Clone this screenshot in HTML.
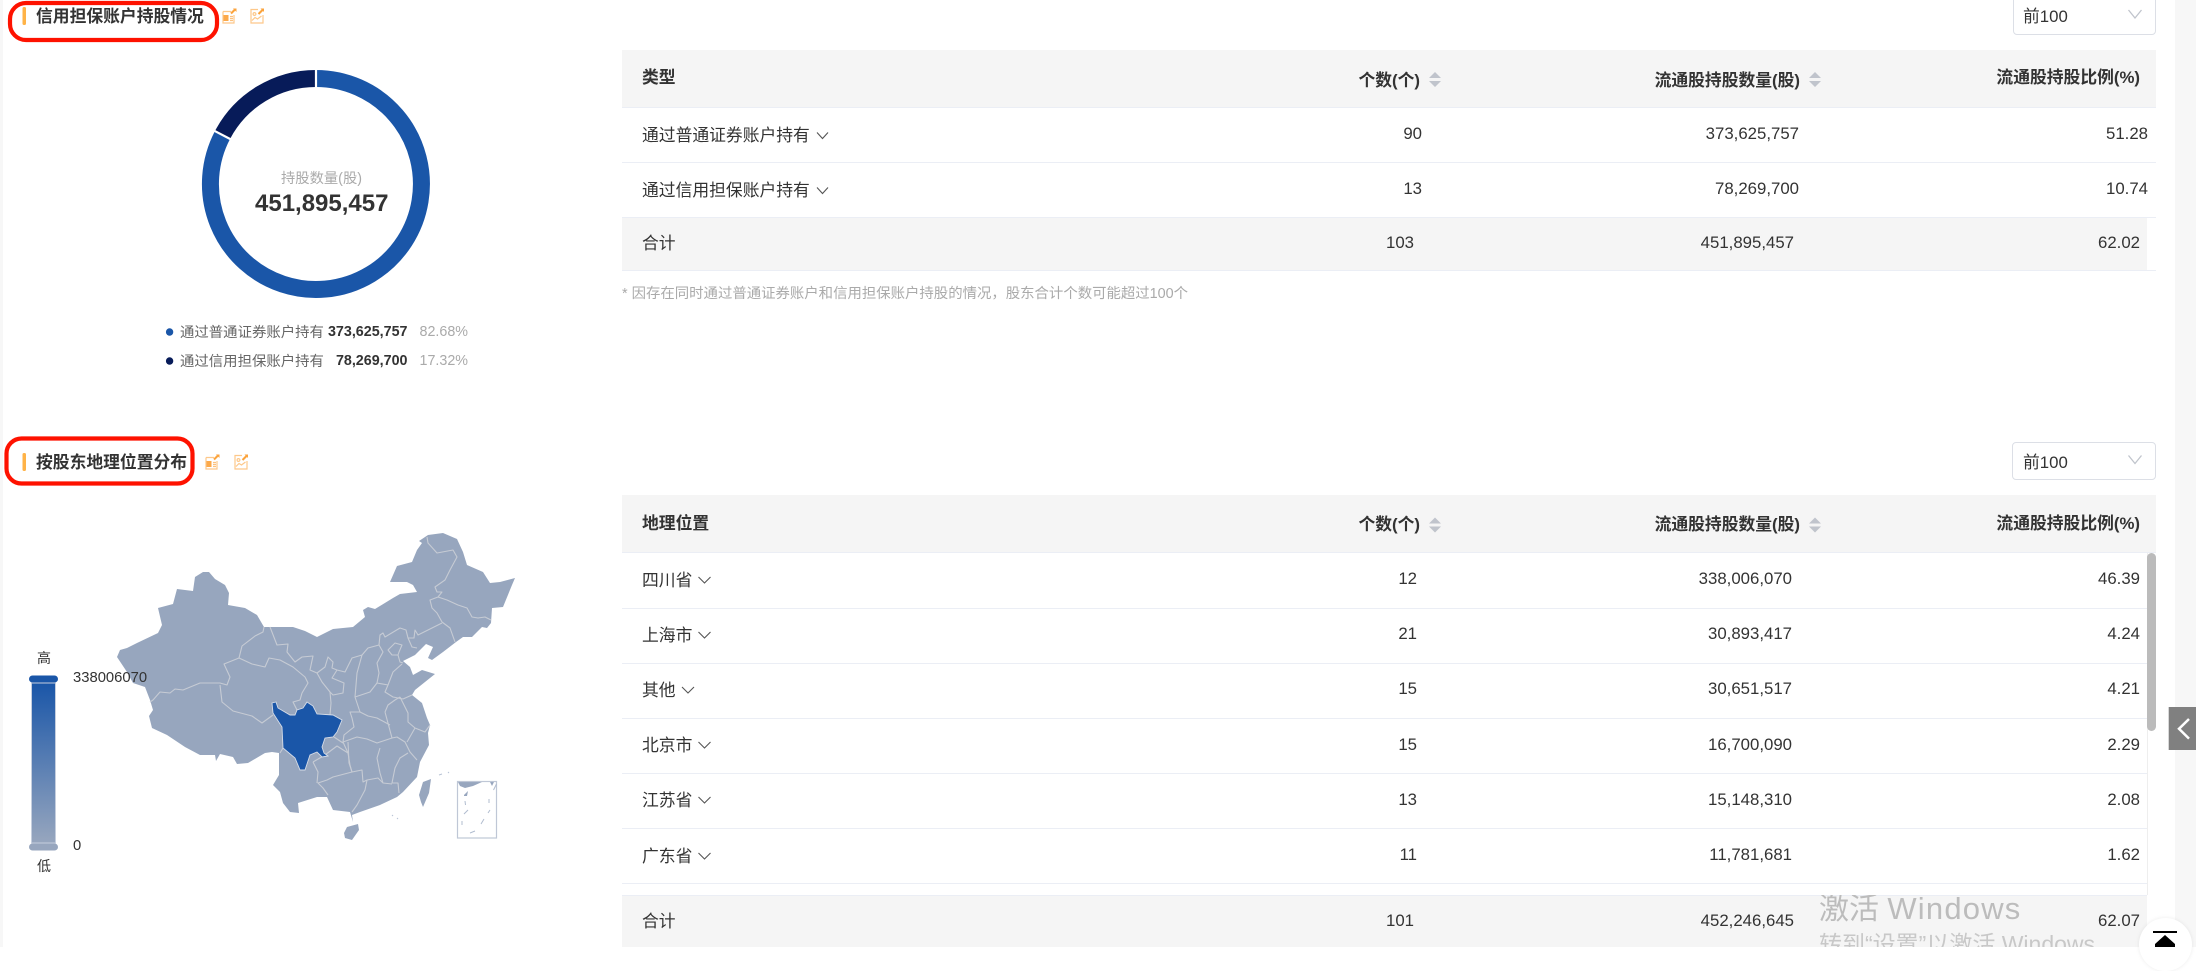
<!DOCTYPE html>
<html lang="zh-CN">
<head>
<meta charset="utf-8">
<title>持股情况</title>
<style>
html,body{margin:0;padding:0;background:#fff}
body{position:relative;width:2196px;height:947px;overflow:hidden;font-family:"Liberation Sans","Noto Sans CJK SC",sans-serif;color:#333;font-size:16.8px}
.a{position:absolute}
.t{position:absolute;white-space:nowrap;line-height:24px;height:24px;z-index:1}
.b{font-weight:700}
.l{position:absolute;height:1px;background:#ebeef5}
.g{position:absolute;background:#f5f5f5}
svg{position:absolute;left:0;top:0}
</style>
</head>
<body>
<div class="a" style="left:0;top:0;width:3px;height:947px;background:#f7f7f7"></div>
<div class="a" style="left:2175px;top:0;width:21px;height:947px;background:#f7f7f7"></div>

<!-- tables backgrounds -->
<div class="g" style="left:622px;top:50px;width:1534px;height:57px"></div>
<div class="g" style="left:622px;top:217px;width:1525px;height:53px"></div>
<div class="l" style="left:622px;top:107px;width:1534px"></div>
<div class="l" style="left:622px;top:162px;width:1534px"></div>
<div class="l" style="left:622px;top:217px;width:1534px"></div>
<div class="l" style="left:622px;top:270px;width:1534px"></div>

<div class="g" style="left:622px;top:495px;width:1534px;height:57px"></div>
<div class="g" style="left:622px;top:895px;width:1525px;height:52px"></div>
<div class="l" style="left:622px;top:552px;width:1534px"></div>
<div class="l" style="left:622px;top:608px;width:1525px"></div>
<div class="l" style="left:622px;top:663px;width:1525px"></div>
<div class="l" style="left:622px;top:718px;width:1525px"></div>
<div class="l" style="left:622px;top:773px;width:1525px"></div>
<div class="l" style="left:622px;top:828px;width:1525px"></div>
<div class="l" style="left:622px;top:883px;width:1525px"></div>
<div class="l" style="left:622px;top:895px;width:1525px"></div>

<!-- scrollbar -->
<div class="a" style="left:2147px;top:553px;width:1px;height:342px;background:#eee"></div>
<div class="a" style="left:2147px;top:553px;width:9px;height:178px;background:#bbb;border-radius:5px"></div>

<!-- section titles -->
<div class="t b" style="left:36px;top:5px;font-size:16.8px">信用担保账户持股情况</div>
<div class="t b" style="left:36px;top:451px;font-size:16.8px">按股东地理位置分布</div>

<!-- selects -->
<div class="a" style="left:2013px;top:-4px;width:141px;height:37px;border:1px solid #dcdfe6;border-radius:4px"></div>
<div class="t" style="left:2023px;top:5px">前100</div>
<div class="a" style="left:2012px;top:442px;width:142px;height:36px;border:1px solid #dcdfe6;border-radius:4px"></div>
<div class="t" style="left:2023px;top:451px">前100</div>

<!-- donut labels -->
<div class="t" style="left:281px;top:167px;font-size:14.3px;color:#aaa">持股数量(股)</div>
<div class="t b" style="left:255px;top:192px;font-size:24px;color:#333">451,895,457</div>
<div class="t" style="left:180px;top:321px;font-size:14.4px;color:#666">通过普通证券账户持有</div>
<div class="t b" style="right:1788.500px;top:320px;font-size:14.300px">373,625,757</div>
<div class="t" style="right:1728px;top:320px;font-size:14.300px;color:#aaa">82.68%</div>
<div class="t" style="left:180px;top:350px;font-size:14.4px;color:#666">通过信用担保账户持有</div>
<div class="t b" style="right:1788.500px;top:349px;font-size:14.300px">78,269,700</div>
<div class="t" style="right:1728px;top:349px;font-size:14.300px;color:#aaa">17.32%</div>

<!-- table 1 head -->
<div class="t b" style="left:642px;top:66px">类型</div>
<div class="t b" style="right:776px;top:69px">个数(个)</div>
<div class="t b" style="right:396px;top:69px">流通股持股数量(股)</div>
<div class="t b" style="right:56px;top:66px">流通股持股比例(%)</div>
<!-- table 1 rows -->
<div class="t" style="left:642px;top:124px">通过普通证券账户持有</div>
<div class="t" style="right:774px;top:122px">90</div>
<div class="t" style="right:397px;top:122px">373,625,757</div>
<div class="t" style="right:48px;top:122px">51.28</div>
<div class="t" style="left:642px;top:179px">通过信用担保账户持有</div>
<div class="t" style="right:774px;top:177px">13</div>
<div class="t" style="right:397px;top:177px">78,269,700</div>
<div class="t" style="right:48px;top:177px">10.74</div>
<div class="t" style="left:642px;top:232px">合计</div>
<div class="t" style="right:782px;top:231px">103</div>
<div class="t" style="right:402px;top:231px">451,895,457</div>
<div class="t" style="right:56px;top:231px">62.02</div>
<div class="t" style="left:622px;top:282px;font-size:14.4px;color:#aaa">* 因存在同时通过普通证券账户和信用担保账户持股的情况，股东合计个数可能超过100个</div>

<!-- table 2 head -->
<div class="t b" style="left:642px;top:512px">地理位置</div>
<div class="t b" style="right:776px;top:513px">个数(个)</div>
<div class="t b" style="right:396px;top:513px">流通股持股数量(股)</div>
<div class="t b" style="right:56px;top:512px">流通股持股比例(%)</div>
<!-- table 2 rows -->
<div class="t" style="left:642px;top:569px">四川省</div><div class="t" style="right:779px;top:567px">12</div><div class="t" style="right:404px;top:567px">338,006,070</div><div class="t" style="right:56px;top:567px">46.39</div>
<div class="t" style="left:642px;top:624px">上海市</div><div class="t" style="right:779px;top:622px">21</div><div class="t" style="right:404px;top:622px">30,893,417</div><div class="t" style="right:56px;top:622px">4.24</div>
<div class="t" style="left:642px;top:679px">其他</div><div class="t" style="right:779px;top:677px">15</div><div class="t" style="right:404px;top:677px">30,651,517</div><div class="t" style="right:56px;top:677px">4.21</div>
<div class="t" style="left:642px;top:734px">北京市</div><div class="t" style="right:779px;top:733px">15</div><div class="t" style="right:404px;top:733px">16,700,090</div><div class="t" style="right:56px;top:733px">2.29</div>
<div class="t" style="left:642px;top:789px">江苏省</div><div class="t" style="right:779px;top:788px">13</div><div class="t" style="right:404px;top:788px">15,148,310</div><div class="t" style="right:56px;top:788px">2.08</div>
<div class="t" style="left:642px;top:845px">广东省</div><div class="t" style="right:779px;top:843px">11</div><div class="t" style="right:404px;top:843px">11,781,681</div><div class="t" style="right:56px;top:843px">1.62</div>
<div class="t" style="left:642px;top:910px">合计</div><div class="t" style="right:782px;top:909px">101</div><div class="t" style="right:402px;top:909px">452,246,645</div><div class="t" style="right:56px;top:909px">62.07</div>

<!-- legend text -->
<div class="t" style="left:37px;top:646px;font-size:14px">高</div>
<div class="t" style="left:37px;top:854px;font-size:14px">低</div>
<div class="t" style="left:73px;top:666px;font-size:14.8px">338006070</div>
<div class="t" style="left:73px;top:834px;font-size:14.8px">0</div>

<svg width="2196" height="947" viewBox="0 0 2196 947">
<defs>
<linearGradient id="vm" x1="0" y1="0" x2="0" y2="1"><stop offset="0" stop-color="#1a56a8"/><stop offset="1" stop-color="#97a6be"/></linearGradient>
<g id="ic1" fill="none" stroke="#fdc88a" stroke-width="1.2">
<path d="M1 3.500H9M12 7V15H1V3.500" />
<rect x="1.500" y="7" width="5" height="6" fill="#fca94a" stroke="none"/>
<path d="M8 8.500h3M8 10.500h3M8 12.500h3" stroke="#fcc17f"/>
<path d="M9 5.500l4-4" stroke="#fba33c" stroke-width="2"/>
<path d="M11 0.500h3.500v3.500z" fill="#fba33c" stroke="none"/>
</g>
<g id="ic2" fill="none" stroke="#fdc88a" stroke-width="1.2">
<path d="M8 1.500H1V15H13V7"/>
<path d="M2 12.500l3-3 2.500 1.500 4-3"/>
<circle cx="4.500" cy="6" r="1.400"/>
<path d="M8.500 6l4-4" stroke="#fba33c" stroke-width="2"/>
<path d="M10.500 0.500h3.500v3.500z" fill="#fba33c" stroke="none"/>
</g>
</defs>

<!-- title bars -->
<rect x="22.500" y="7" width="3.500" height="18" rx="1.500" fill="#ffb347"/>
<rect x="22.500" y="453" width="3.500" height="18" rx="1.500" fill="#ffb347"/>
<!-- red annotations -->
<rect x="10" y="3" width="207" height="37" rx="16" fill="none" stroke="#fe1200" stroke-width="4.200"/>
<rect x="6.500" y="438.500" width="186" height="45" rx="15" fill="none" stroke="#fe1200" stroke-width="4.200"/>
<!-- title icons -->
<use href="#ic1" x="222" y="8"/><use href="#ic2" x="250" y="8"/>
<use href="#ic1" x="205" y="454"/><use href="#ic2" x="234" y="454"/>

<!-- donut -->
<path d="M316 78.500A105.500 105.500 0 1 1 222.500 135" fill="none" stroke="#1a56a8" stroke-width="17"/>
<path d="M222.500 135A105.500 105.500 0 0 1 316 78.500" fill="none" stroke="#071b59" stroke-width="17"/>
<path d="M316 68V90M231.800 139.900L213.200 130.200" stroke="#fff" stroke-width="2.200"/>
<circle cx="169.600" cy="332" r="3.700" fill="#1a56a8"/>
<circle cx="169.600" cy="361" r="3.700" fill="#071b59"/>

<!-- sort carets -->
<g fill="#c0c4cc">
<path d="M1429 78l6-6 6 6zM1429 81l6 6 6-6z"/>
<path d="M1809 78l6-6 6 6zM1809 81l6 6 6-6z"/>
<path d="M1429 523.500l6-6 6 6zM1429 526.500l6 6 6-6z"/>
<path d="M1809 523.500l6-6 6 6zM1809 526.500l6 6 6-6z"/>
</g>

<!-- row chevrons -->
<g fill="none" stroke="#555" stroke-width="1.100">
<path d="M817 132.500l5.500 6 5.500-6M817 187.500l5.500 6 5.500-6"/>
<path d="M698.500 577l6 6 6-6M698.500 632l6 6 6-6M682 687l6 6 6-6M698.500 742l6 6 6-6M698.500 797l6 6 6-6M698.500 853l6 6 6-6"/>
</g>
<!-- select chevrons -->
<g fill="none" stroke="#c0c4cc" stroke-width="1.300">
<path d="M2128.500 10l6.500 8 6.500-8"/>
<path d="M2128.500 455.500l6.500 8 6.500-8"/>
</g>

<!-- visual map -->
<rect x="29" y="675.500" width="29" height="7" rx="3.500" fill="#1a56a8"/>
<rect x="31.500" y="683" width="24" height="160" fill="url(#vm)" stroke="#c5cede" stroke-width="1"/>
<rect x="29" y="843.500" width="29" height="7" rx="3.500" fill="#97a6be"/>

<!-- china map -->
<g fill="#97a6be">
<path d="M120 650L127 648L137 643L158 633L162 625L158 608L173 604L177 589L193 591L195 577L203 572L209 572L215 579L225 585L229 593L228 605L245 608L257 615L264 627L293 627L305 631L317 637L333 629L353 627L365 617L363 610L368 607L375 609L393 598L400 594L417 592L413 585L407 582L390 582L397 566L412 562L417 550L422 543L419 541L428 535L443 533L457 539L463 552L467 565L483 572L490 583L500 582L515 578L512 585L503 607L492 608L491 623L487 628L482 627L472 637L463 637L456 642L443 652L432 660L428 658L433 647L426 644L415 655L403 661L410 667L413 675L422 670L435 674L425 682L415 690L412 695L422 703L427 718L430 725L428 733L429 745L420 762L417 777L403 792L397 797L380 805L360 812L352 815L353 822L350 812L333 810L327 797L317 797L298 803L299 813L290 812L283 803L280 792L273 785L279 775L279 753L272 752L265 753L248 763L237 764L233 757L220 754L216 761L215 755L200 755L185 747L167 735L152 728L149 716L153 710L150 700L145 687L133 683L127 672L117 657Z"/>
<path d="M344 833L347 827L358 824L359 830L352 840L345 838Z"/>
<path d="M419 795L423 782L431 779L429 793L423 807L421 802Z"/>
<path d="M458 782H482L473 786L465 788L460 786Z"/>
<path d="M490 782H494L492 786Z"/>
<path d="M464 795L468 791L467 796L464 796Z"/>
<path d="M439 775l3-1M448 773l1-1M392 815l1 1M397 818l1 1" stroke="#b7c2d4"/>
</g>
<g fill="none" stroke="#c6cbd4" stroke-width="1.100" stroke-linejoin="round">
<path d="M264 627L263 632L255 636L242 646L239 658L224 664L230 677L227 685L220 683L200 683L183 690L175 689L170 693L160 692L153 700L150 702"/>
<path d="M220 685L222 702L233 711L252 716L262 723L273 715"/>
<path d="M239 658L252 664L265 667L269 658L280 660L293 667L305 677L308 683L302 693L300 700L293 702L297 710"/>
<path d="M270 627L277 645L288 644L287 652L295 662L302 657L313 656L310 670L317 673L325 667L328 657L333 662L332 668L337 670L345 672L352 658L362 655L368 648L379 645L380 635L383 633L385 637L400 628L406 630L408 638L414 638L415 630L418 635L432 628L442 623"/>
<path d="M317 673L322 682L330 692L331 703L330 715"/>
<path d="M337 670L332 678L344 683L343 693L333 695L330 692"/>
<path d="M362 655L357 673L355 697L360 712L350 712L352 718L354 727L344 735L343 742L348 753L350 765L352 772"/>
<path d="M379 645L383 652L377 663L379 673L377 683L370 692L355 697"/>
<path d="M377 683L388 685L393 672L402 664M388 685L385 692L393 697L403 699L412 695"/>
<path d="M388 650L395 643L402 645L399 652L398 655L392 655ZM398 655L400 662L403 663"/>
<path d="M408 638L412 647L417 648"/>
<path d="M442 622L450 628L455 642"/>
<path d="M438 597L447 600L458 605L467 608L472 617L478 618L485 617L491 620"/>
<path d="M438 597L430 600L432 608L437 613L442 622"/>
<path d="M427 537L428 543L437 553L453 550L457 557L450 570L445 580L435 587L437 592L442 592L438 597"/>
<path d="M360 712L368 716L377 718L390 725M385 712L388 705L395 700L400 697M385 712L392 738M400 697L403 703L408 713L408 722L415 728L425 732L430 725"/>
<path d="M343 742L357 737L367 739L377 743L392 738L397 737L405 742L410 752L417 760M407 742L415 728"/>
<path d="M408 753L400 758L395 768L392 783L398 783L399 793"/>
<path d="M380 748L377 758L380 773L383 783L392 784M383 783L378 778L367 780L365 790L357 805L352 812"/>
<path d="M348 742L349 763L352 772L362 770L363 782L367 780M352 772L333 777L327 780L318 783L323 788L328 795"/>
<path d="M313 762L318 772L317 783M313 762L325 755L337 746L348 753"/>
<path d="M334 737L343 743M280 753L283 748"/>
</g>
<path d="M272 703L276 702L278 708L290 715L295 715L297 710L303 708L307 702L313 706L317 714L333 715L342 720L337 732L333 737L325 738L322 747L324 753L328 756L322 757L317 752L310 755L305 770L300 770L295 758L283 748L282 727L273 713Z" fill="#1a56a8" stroke="#d5dce8" stroke-width="0.900"/>
<rect x="457.500" y="781.500" width="39" height="56.500" fill="none" stroke="#bfc7d6" stroke-width="1.200"/>
<g stroke="#b0bccf" stroke-width="1" fill="none">
<path d="M465 801l.5 4M489 799v4M488 813l2-3M468 810l-4 4M462 821v4M484 819l-3 5M475 831l-5 2M496.500 784l-3 6"/>
</g>

<!-- side tab -->
<rect x="2168.700" y="707" width="27.300" height="43" fill="#808080"/>
<path d="M2189 719l-10 9.800 10 9.800" fill="none" stroke="#fff" stroke-width="2.500"/>
</svg>

<!-- watermark -->
<div class="a" style="left:1819px;top:895px;width:300px;height:52px;overflow:hidden;z-index:1;white-space:nowrap">
<div class="a" style="left:0;top:-3px;font-size:30px;line-height:34px;color:#bcbcbc">激活 <span style="letter-spacing:1.200px;font-size:31px">Windows</span></div>
<div class="a" style="left:0;top:34px;font-size:23px;line-height:30px;color:#c8c8c8">转到“设置”以激活 Windows</div>
</div>

<!-- back to top -->
<div class="a" style="left:2138.500px;top:917.500px;width:53px;height:53px;border-radius:50%;background:#fff;box-shadow:0 0 4px rgba(0,0,0,.08);z-index:2"></div>
<svg width="2196" height="947" viewBox="0 0 2196 947" style="z-index:3"><path d="M2153 931h24v2h-24zM2165 935l10 9v3h-20v-3z" fill="#000"/></svg>
</body>
</html>
